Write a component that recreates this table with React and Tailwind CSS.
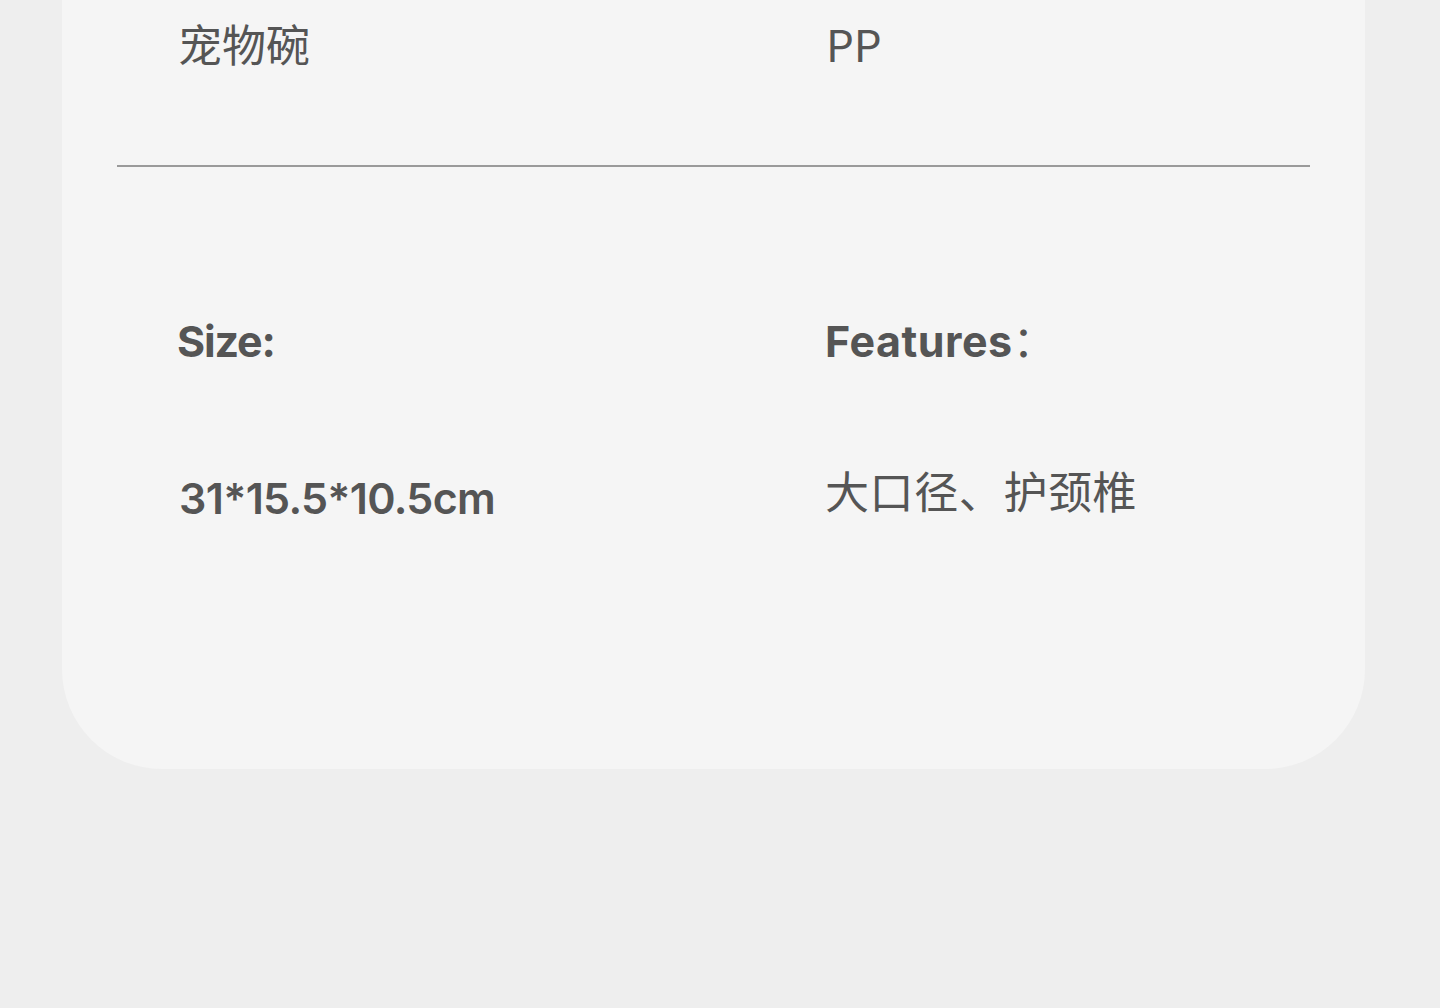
import React from 'react';

const cjk = { fontFamily: '"Noto Sans CJK SC", sans-serif' };

const App = () => {
  return (
    <div className="w-[1440px] h-[1008px] bg-[#eeeeee] overflow-hidden">
      <div className="ml-[62px] w-[1303px] h-[769px] bg-[#f5f5f5] rounded-b-[100px] flex flex-col">
        {/* Material row */}
        <div className="grid grid-cols-[648px_1fr] pl-[116px] pt-[11px] text-[44px] leading-[64px] text-[#555555] font-['Noto_Sans_CJK_SC',sans-serif]">
          <p>宠物碗</p>
          <p>PP</p>
        </div>

        <div className="mx-[55px] mt-[90px] h-[2px] bg-[#9a9a9a]" />

        {/* Size / features */}
        <div className="grid grid-cols-[648px_1fr] pl-[115px] pt-[148px] text-[#555555]">
          <p className="text-[43px] leading-[52px] font-bold font-['Inter','Noto_Sans_CJK_SC',sans-serif] tracking-[-1.2px]">Size:</p>
          <p className="text-[43px] leading-[52px] font-bold font-['Inter','Noto_Sans_CJK_SC',sans-serif] tracking-[0.5px]">
            Features<span style={cjk} className="font-normal leading-[0]">：</span>
          </p>
          <p className="mt-[105px] pl-[2px] text-[43px] leading-[52px] font-semibold font-['Inter',sans-serif] tracking-[-0.7px]">31*15.5*10.5cm</p>
          <p className="mt-[97px] text-[44px] leading-[52px] tracking-[0.6px] font-['Noto_Sans_CJK_SC',sans-serif]">大口径、护颈椎</p>
        </div>
      </div>
    </div>
  );
};

export default App;
